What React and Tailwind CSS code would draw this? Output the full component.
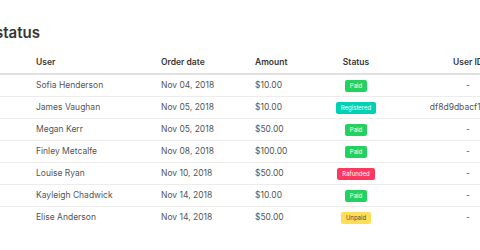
import React from 'react'

const orders = [
    { user: 'Sofia Henderson', date: 'Nov 04, 2018', amount: '$10.00', status: 'Paid', userId: '-' },
    { user: 'James Vaughan', date: 'Nov 05, 2018', amount: '$10.00', status: 'Registered', userId: 'df8d9dbacf18a2c4' },
    { user: 'Megan Kerr', date: 'Nov 05, 2018', amount: '$50.00', status: 'Paid', userId: '-' },
    { user: 'Finley Metcalfe', date: 'Nov 08, 2018', amount: '$100.00', status: 'Paid', userId: '-' },
    { user: 'Louise Ryan', date: 'Nov 10, 2018', amount: '$50.00', status: 'Rafunded', userId: '-' },
    { user: 'Kayleigh Chadwick', date: 'Nov 14, 2018', amount: '$10.00', status: 'Paid', userId: '-' },
    { user: 'Elise Anderson', date: 'Nov 14, 2018', amount: '$50.00', status: 'Unpaid', userId: '-' },
];

const tagStyles = {
    Paid: 'bg-[#23d160] text-white',
    Registered: 'bg-[#00d1b2] text-white',
    Rafunded: 'bg-[#ff3860] text-white',
    Unpaid: 'bg-[#ffdd57] text-[#4a4a3a]',
};

function StatusTag({ status }) {
    return (
        <span className={`inline-flex items-center h-[12px] px-[5px] rounded-[2px] text-[6px] leading-none ${tagStyles[status]}`}>
            {status}
        </span>
    );
}

export default function App() {
    return (
        <div className="w-[480px] h-[250px] overflow-hidden bg-white" style={{ fontFamily: 'Inter, "Noto Sans", sans-serif' }}>
            <h1 className="-ml-[5px] pt-[23px] h-[52px] text-[15px] leading-[20px] font-semibold text-[#363636]">
                status
            </h1>
            <table className="table-fixed border-collapse w-[541px] text-[8.5px]">
                <colgroup>
                    <col className="w-[28px]" />
                    <col className="w-[125px]" />
                    <col className="w-[94px]" />
                    <col className="w-[70px]" />
                    <col className="w-[78px]" />
                    <col className="w-[146px]" />
                </colgroup>
                <thead>
                    <tr className="h-[22px] border-b-2 border-[#e0e0e0] text-[#363636]">
                        <th></th>
                        <th className="px-2 text-left font-semibold">User</th>
                        <th className="px-2 text-left font-semibold">Order date</th>
                        <th className="px-2 text-left font-semibold">Amount</th>
                        <th className="text-center font-semibold">Status</th>
                        <th className="text-center font-semibold">User ID</th>
                    </tr>
                </thead>
                <tbody className="text-[#555555]">
                    {orders.map((order, i) => (
                        <tr key={order.user} className={`h-[22px] ${i < orders.length - 1 ? 'border-b border-[#ececec]' : ''}`}>
                            <td></td>
                            <td className="px-2">{order.user}</td>
                            <td className="px-2">{order.date}</td>
                            <td className="px-2">{order.amount}</td>
                            <td className="text-center"><StatusTag status={order.status} /></td>
                            <td className="text-center whitespace-nowrap">{order.userId}</td>
                        </tr>
                    ))}
                </tbody>
            </table>
        </div>
    )
}
